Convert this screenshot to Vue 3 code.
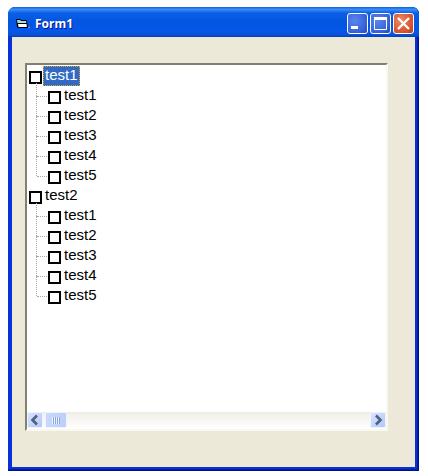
<script setup>
const groups = ['test1', 'test2'].map((label, i) => ({
  label,
  selected: i === 0,
  children: ['test1', 'test2', 'test3', 'test4', 'test5'],
}))
</script>

<template>
  <div class="page">
    <div class="window">
      <div class="titlebar">
        <svg class="appicon" width="16" height="16" viewBox="0 0 16 16">
          <path d="M2 3h4l1 1h5l1 1 1 7H4L3 11z" fill="#000"/>
          <path d="M3 4h3l1 1h5l.5 2H3.500z" fill="#8fe6e6"/>
          <path d="M4 8h8.500l.4 3H4.500z" fill="#fff"/>
          <path d="M14 11.500h2" stroke="#8a93a8" stroke-width="1"/>
        </svg>
        <span class="title">Form1</span>
        <div class="buttons">
          <div class="wbtn blue">
            <svg width="21" height="21" viewBox="0 0 21 21"><rect x="4" y="13" width="7" height="3" fill="#fff"/></svg>
          </div>
          <div class="wbtn blue">
            <svg width="21" height="21" viewBox="0 0 21 21"><path d="M4.500 4.500h12v12h-12z" fill="none" stroke="#fff"/><rect x="4" y="4" width="13" height="3" fill="#fff"/></svg>
          </div>
          <div class="wbtn red">
            <svg width="21" height="21" viewBox="0 0 21 21"><path d="M5 5l11 11M16 5L5 16" stroke="#fff" stroke-width="2.400"/></svg>
          </div>
        </div>
      </div>
      <div class="client">
        <div class="tree">
          <div class="rows">
            <div v-for="g in groups" :key="g.label + g.selected" class="group">
              <div class="row">
                <span class="check"></span>
                <span class="text" :class="{ selected: g.selected }">{{ g.label }}</span>
              </div>
              <div v-for="c in g.children" :key="c" class="row child">
                <span class="check"></span>
                <span class="text">{{ c }}</span>
              </div>
            </div>
          </div>
          <div class="hscroll">
            <div class="sbtn">
              <svg width="16" height="16" viewBox="0 0 16 16"><path d="M10 3.500L5.500 8l4.500 4.500" fill="none" stroke="#4d6185" stroke-width="2.600"/></svg>
            </div>
            <div class="thumb"><i></i><i></i><i></i><i></i></div>
            <div class="track"></div>
            <div class="sbtn">
              <svg width="16" height="16" viewBox="0 0 16 16"><path d="M6 3.500L10.500 8 6 12.500" fill="none" stroke="#4d6185" stroke-width="2.600"/></svg>
            </div>
          </div>
        </div>
      </div>
    </div>
  </div>
</template>

<style>
html, body { margin: 0; background: #fff; }
</style>

<style scoped>
.page {
  width: 428px;
  height: 476px;
  padding: 7px 0 0 8px;
  box-sizing: border-box;
  overflow: hidden;
}
.window {
  width: 411px;
  height: 464px;
  display: flex;
  flex-direction: column;
  border-radius: 7px 7px 0 0;
  overflow: hidden;
  background: #0831d9;
  box-shadow: inset -1px -1px 0 #00138c, inset -2px -2px 0 #001ea0;
}
.titlebar {
  height: 30px;
  box-sizing: border-box;
  flex: none;
  display: flex;
  align-items: center;
  padding: 3px 5px 0 6px;
  background: linear-gradient(180deg, #0a5fe0 0%, #3c8ef5 8%, #0a5fe8 20%, #0355e0 50%, #0457ea 80%, #0a52d8 92%, #0340b8 100%);
}
.appicon { flex: none; margin-right: 5px; }
.title {
  color: #fff;
  font: bold 12px "Noto Sans", sans-serif;
  text-shadow: 1px 1px 0 #0f1089;
}
.buttons { margin-left: auto; display: flex; gap: 2px; }
.wbtn {
  width: 21px;
  height: 21px;
  box-sizing: border-box;
  border: 1px solid #fff;
  border-radius: 3px;
  display: flex;
  align-items: center;
  justify-content: center;
}
.wbtn svg { flex: none; }
.blue { background: radial-gradient(circle at 35% 35%, #5b85ee 0%, #3a66dd 60%, #2448b8 100%); }
.red { background: radial-gradient(circle at 35% 35%, #ec8a68 0%, #dd5a34 55%, #bf3c1c 100%); }
.client {
  flex: 1;
  margin: 0 4px 4px;
  background: #ece9d8;
  padding: 26px 27px 36px 13px;
  display: flex;
  min-height: 0;
}
.tree {
  flex: 1;
  box-sizing: border-box;
  background: #fff;
  border-style: solid;
  border-width: 2px;
  border-color: #82806f #f8f7f0 #f8f7f0 #82806f;
  display: flex;
  flex-direction: column;
  font: 15px "Liberation Sans", sans-serif;
  color: #000;
}
.rows {
  flex: 1;
  padding: 1px 0 0 2px;
}
.row {
  position: relative;
  height: 20px;
  display: flex;
  align-items: center;
}
.check {
  width: 9px;
  height: 9px;
  border: 2px solid #000;
  background: #fff;
  flex: none;
  margin-top: 2px;
  margin-right: 1px;
}
.text {
  height: 20px;
  line-height: 18px;
  padding: 0 2px;
  box-sizing: border-box;
}
.selected {
  background: #316ac5;
  color: #fff;
  outline: 1px dotted #e8a020;
  outline-offset: -1px;
}
.child { padding-left: 19px; }
.child::before {
  content: "";
  position: absolute;
  left: 7px;
  top: -10px;
  height: 20px;
  border-left: 1px dotted #a8a8a8;
}
.group > .row:nth-child(2)::before {
  top: -3px;
  height: 13px;
}
.child::after {
  content: "";
  position: absolute;
  left: 8px;
  top: 10px;
  width: 10px;
  border-top: 1px dotted #a8a8a8;
}
.hscroll {
  height: 16px;
  flex: none;
  margin: 0 0 1px 0;
  display: flex;
  align-items: stretch;
  background: linear-gradient(180deg, #eeede5 0%, #f6f5f0 40%, #fefefe 100%);
}
.sbtn {
  width: 16px;
  flex: none;
  box-sizing: border-box;
  border: 1px solid #eef3ff;
  border-radius: 2px;
  background: linear-gradient(135deg, #d8e4fd, #b4c8f6);
  display: flex;
  align-items: center;
  justify-content: center;
}
.sbtn svg { flex: none; margin: -1px; }
.thumb {
  width: 22px;
  flex: none;
  margin-left: 2px;
  box-sizing: border-box;
  border: 1px solid #eef3ff;
  border-radius: 2px;
  background: linear-gradient(90deg, #c9d8fb, #bccffa);
  display: flex;
  align-items: center;
  justify-content: center;
  gap: 1px;
}
.thumb i {
  width: 1px;
  height: 7px;
  background: #eef4fe;
  border-right: 1px solid #8ca6e0;
}
.thumb i + i { margin-left: -1px; }
.track { flex: 1; }
</style>
